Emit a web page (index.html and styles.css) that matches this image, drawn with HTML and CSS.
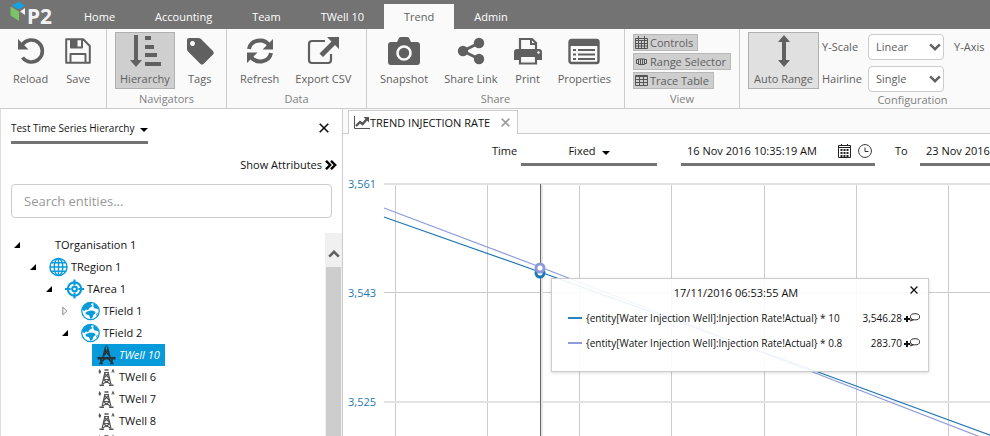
FILE: index.html
```html
<!DOCTYPE html>
<html lang="en">
<head>
    <meta charset="UTF-8">
    <meta name="viewport" content="width=device-width, initial-scale=1.0">
    <title>P2 - Trend</title>
    <link rel="stylesheet" href="styles.css">
</head>
<body>

<svg class="sprite" aria-hidden="true">
    <symbol id="globe" viewBox="0 0 20 20">
        <g fill="none" stroke="#089bdb" stroke-width="1.5">
            <circle cx="10" cy="10" r="9"/>
            <ellipse cx="10" cy="10" rx="4.5" ry="9"/>
            <path d="M10 1v18M1 10h18M2.5 5.5h15M2.5 14.5h15"/>
        </g>
    </symbol>
    <symbol id="target" viewBox="0 0 20 20">
        <g fill="none" stroke="#089bdb" stroke-width="2.2">
            <circle cx="10" cy="10" r="7"/>
            <circle cx="10" cy="10" r="2.5"/>
            <path d="M10 0v6M10 14v6M0 10h6M14 10h6"/>
        </g>
    </symbol>
    <symbol id="earth" viewBox="0 0 20 20">
        <circle cx="10" cy="10" r="9.2" fill="#fff" stroke="#089bdb" stroke-width="1.3"/>
        <path fill="#089bdb" d="M1 9 3 4l4-3 5 0-1.500 2L12 5 9 6.500 7.500 9 5 8.500 4 10ZM13 1.500l4 3 2 4-2.500-1L14 7l-1-2ZM5 11l5-1.500 4 .5 1.500 2-2.500 2-1 3-2 1.500-1.500-4L5 13.500ZM16 13l2-1-1.500 3.500Z"/>
    </symbol>
    <symbol id="well" viewBox="0 0 18 20">
        <g fill="none" stroke="#555" stroke-width="1.1">
            <path d="M7.500 5 4.500 17.500M10.500 5l3 12.500M6.500 5.500h5M6.500 9h5M6 12.500h6M7 6l5 6M11 6l-5 6M5 17l7-4M13 17l-7-4"/>
            <path d="M2 18.200h4.500M11.500 18.200H16M7 3h4" stroke-width="1.600"/>
        </g>
        <path fill="#555" d="M2 2l1.600 2.500L3 6.500H1.600L1 4.500ZM15.500 1.500l1.700 4h-1.200l-.5-1.400-.5 1.400h-1.200Z"/>
    </symbol>
    <symbol id="rig" viewBox="0 0 18 20">
        <g fill="none" stroke="#26323a" stroke-width="1.2">
            <path d="M8 2 5.4 12M10 2l2.600 10M7 5h4M6.500 8h5M7 5l5 6M11 5l-5 6M8 1h2"/>
            <path d="M0 13.200h18" stroke-width="2.600"/>
            <path d="M3.500 14v5M14.500 14v5M1.800 18.600h3.600M12.600 18.600h3.600M4 17l3-3M14 17l-3-3" stroke-width="1.500"/>
        </g>
    </symbol>
    <symbol id="open" viewBox="0 0 6 6"><path d="M6 0v6H0Z"/></symbol>
    <symbol id="closed" viewBox="0 0 6 10"><path fill="#fff" stroke="#888" d="M.8 1.2 4.8 5 .8 8.8Z"/></symbol>
    <symbol id="close" viewBox="0 0 10 10"><path fill="none" stroke="currentColor" stroke-width="1.6" d="m.7.7 8.6 8.6M9.3.7.7 9.3"/></symbol>
    <symbol id="caret" viewBox="0 0 8 4"><path d="M0 0h8L4 4Z"/></symbol>
    <symbol id="chevron" viewBox="0 0 12 8"><path fill="none" stroke="#606060" stroke-width="2.4" d="m1.2 1.4 4.8 4.8 4.8-4.8"/></symbol>
    <symbol id="calendar" viewBox="0 0 13 14">
        <path fill="none" stroke="#222" d="M.5 1.5h12v12H.5ZM1 3.5h11M3.5 0v2M9.5 0v2"/>
        <path stroke="#222" stroke-width="2" stroke-dasharray="2 1" d="M2.500 6h8M2.500 9h8M2.500 12h8"/>
    </symbol>
    <symbol id="clock" viewBox="0 0 14 14"><path fill="none" stroke="#333" d="M7 .6a6.4 6.4 0 1 0 .01 0ZM7 3.5V7.5h3.5"/></symbol>
    <symbol id="comment" viewBox="0 0 16 9">
        <ellipse cx="11" cy="3.800" rx="4.600" ry="3.100" fill="none" stroke="#333"/>
        <path fill="none" stroke="#333" d="M7.500 5.500 6.500 8 9.500 6.800"/>
        <path stroke="#111" stroke-width="2" d="M0 6h6M3 3v6"/>
    </symbol>
</svg>

<header class="topbar">
    <a href="#" class="logo" aria-label="P2">
        <svg class="logo-mark" viewBox="0 0 17 20" aria-hidden="true">
            <path fill="#13a3e2" d="M8.500 0 15 3.500 8.500 7.500 2 3.500Z"/>
            <path fill="#7bc366" d="M.5 4.500 9 9.500V19L.5 13.500Z"/>
            <path fill="#f2f2f2" d="M10 9.500 15 6v7Z"/>
        </svg>
        <span class="logo-text">P2</span>
    </a>
    <nav class="menu">
        <a href="#">Home</a>
        <a href="#">Accounting</a>
        <a href="#">Team</a>
        <a href="#">TWell 10</a>
        <a href="#" class="active">Trend</a>
        <a href="#">Admin</a>
    </nav>
</header>

<div class="ribbon">
    <section class="group group-file">
        <div class="tools">
            <button class="tool">
                <svg viewBox="0 0 28 28"><path fill="none" stroke="#606060" stroke-width="3.600" d="M5.500 7.500A11 11 0 1 1 5.500 20.500"/><path fill="#606060" d="M1 2v10.500h10.500Z"/></svg>
                Reload
            </button>
            <button class="tool">
                <svg viewBox="0 0 28 28"><path fill="none" stroke="#606060" stroke-width="2" stroke-linejoin="round" d="M2.200 2.200h17L25.800 9v16.800H2.200ZM6.500 25.500V17h15v8.500M7 2.500v8h11v-8"/><path fill="#606060" d="M7 2h6.500v8.500H7Z"/></svg>
                Save
            </button>
        </div>
    </section>
    <section class="group group-nav">
        <div class="tools">
            <button class="tool pressed">
                <svg viewBox="0 0 32 32"><path fill="#606060" d="M5 0h4v25h4l-6 7-6-7h4ZM16 1h6v4h-6ZM16 10h9v4h-9ZM16 18h12v4H16ZM16 27h16v4H16Z"/></svg>
                Hierarchy
            </button>
            <button class="tool">
                <svg viewBox="0 0 28 28"><path fill="#606060" fill-rule="evenodd" d="M3 1h9q2 0 3 1L27 14q1.500 2 0 3.500L17.500 27q-1.500 1.200-3 0L2 14.500Q1 13.500 1 12V3q0-2 2-2ZM6.500 4a2.500 2.500 0 1 0 .01 0Z"/></svg>
                Tags
            </button>
        </div>
        <h2>Navigators</h2>
    </section>
    <section class="group group-data">
        <div class="tools">
            <button class="tool">
                <svg viewBox="0 0 28 28"><path fill="none" stroke="#606060" stroke-width="4" d="M3 12A11 10 0 0 1 23 8M25 16A11 10 0 0 1 5 20"/><path fill="#606060" d="M27 2v10.500H16.500ZM1 26V15.500h10.500Z"/></svg>
                Refresh
            </button>
            <button class="tool">
                <svg class="wide" viewBox="0 0 32 28"><path fill="none" stroke="#606060" stroke-width="2.200" d="M18 4H5Q2 4 2 7v16q0 3 3 3h16q3 0 3-3v-6"/><path fill="#606060" d="M20 0h12v12l-4-4-12 12-3.500-3.500L24.500 4.500Z"/></svg>
                Export CSV
            </button>
        </div>
        <h2>Data</h2>
    </section>
    <section class="group group-share">
        <div class="tools">
            <button class="tool">
                <svg class="wide" viewBox="0 0 32 28"><path fill="#606060" d="M3 5h6l2-4q.500-1 2-1h6q1.500 0 2 1l2 4h6q3 0 3 3v17q0 3-3 3H3q-3 0-3-3V8q0-3 3-3Z"/><circle cx="16" cy="16" r="6.500" fill="#606060" stroke="#fafafa" stroke-width="2.600"/></svg>
                Snapshot
            </button>
            <button class="tool">
                <svg viewBox="0 0 28 28"><g fill="#606060"><circle cx="6" cy="14" r="5.200"/><circle cx="22" cy="6" r="5.200"/><circle cx="22" cy="22" r="5.200"/></g><path fill="none" stroke="#606060" stroke-width="3" d="M22 6 6 14l16 8"/></svg>
                Share Link
            </button>
            <button class="tool">
                <svg viewBox="0 0 28 28"><path fill="#606060" d="M3 12h22q3 0 3 3v8h-5v-4H5v4H0v-8q0-3 3-3Z"/><path fill="#fafafa" stroke="#606060" stroke-width="2.200" d="M6 13V2h12l4 4v7ZM6 19h16v7.500H6Z"/><path stroke="#606060" stroke-width="2" d="M17 2v5h5" fill="none"/><circle cx="24.500" cy="15.500" r="1.200" fill="#fafafa"/></svg>
                Print
            </button>
            <button class="tool">
                <svg class="wide" viewBox="0 0 32 28"><rect x="1.500" y="3" width="29" height="23" rx="2" fill="#fafafa" stroke="#606060" stroke-width="2.400"/><path fill="#606060" d="M1 3h30v6H1Z"/><path stroke="#606060" stroke-width="2" d="M5 13h3M10 13h17M5 17.500h3M10 17.500h17M5 22h3M10 22h17"/></svg>
                Properties
            </button>
        </div>
        <h2>Share</h2>
    </section>
    <section class="group group-view">
        <div class="toggles">
            <button class="toggle">
                <svg viewBox="0 0 13 13"><path fill="none" stroke="#555" d="M.5 2.500h12v10H.5ZM.5 4.500h12M.5 7.500h12M.5 10h12M3.500 4v9M6.500 4v9M9.500 4v9M3.500 0v4M9.500 0v4"/></svg>
                Controls
            </button>
            <button class="toggle">
                <svg viewBox="0 0 13 13"><path fill="none" stroke="#555" d="M3 4.500H1.500v4H3M10 4.500h1.500v4H10M3.500 4v5.500h6V4ZM5.500 4v5M7.500 4v5"/></svg>
                Range Selector
            </button>
            <button class="toggle">
                <svg viewBox="0 0 13 13"><path fill="none" stroke="#555" d="M.5 1.500h12v10H.5ZM.5 2.500h12M.5 5.500h12M.5 8.500h12M4.500 2v10M8.500 2v10"/></svg>
                Trace Table
            </button>
        </div>
        <h2>View</h2>
    </section>
    <section class="group group-config">
        <div class="config">
            <button class="tool pressed light">
                <svg viewBox="0 0 32 32"><path fill="#606060" d="M16 0l6 7h-4v18h4l-6 7-6-7h4V7h-4Z"/></svg>
                Auto Range
            </button>
            <div class="fields">
                <label for="yScale">Y-Scale</label>
                <span class="select">
                    <select id="yScale"><option>Linear</option><option>Log</option></select>
                    <svg><use href="#chevron"/></svg>
                </span>
                <span>Y-Axis</span>
                <label for="hairline">Hairline</label>
                <span class="select">
                    <select id="hairline"><option>Single</option><option>Multiple</option></select>
                    <svg><use href="#chevron"/></svg>
                </span>
            </div>
        </div>
        <h2>Configuration</h2>
    </section>
</div>

<main class="workspace">
    <aside class="sidebar">
        <div class="sidebar-head">
            <button class="dropdown hierarchy">Test Time Series Hierarchy <svg class="caret"><use href="#caret"/></svg></button>
            <button class="close" aria-label="Close"><svg><use href="#close"/></svg></button>
        </div>
        <a href="#" class="attributes">Show Attributes
            <svg viewBox="0 0 12 10"><path fill="none" stroke="#000" stroke-width="2.400" d="m1 .8 4.200 4.200L1 9.200M6 .8 10.200 5 6 9.200"/></svg>
        </a>
        <input type="text" class="search" placeholder="Search entities..." aria-label="Search entities">
        <div class="tree-wrap">
            <ul class="tree">
                <li><svg class="arrow"><use href="#open"/></svg><span class="icon"></span>TOrganisation 1</li>
                <li class="level-1"><svg class="arrow"><use href="#open"/></svg><svg class="icon"><use href="#globe"/></svg>TRegion 1</li>
                <li class="level-2"><svg class="arrow"><use href="#open"/></svg><svg class="icon"><use href="#target"/></svg>TArea 1</li>
                <li class="level-3"><svg class="arrow shut"><use href="#closed"/></svg><svg class="icon"><use href="#earth"/></svg>TField 1</li>
                <li class="level-3"><svg class="arrow"><use href="#open"/></svg><svg class="icon"><use href="#earth"/></svg>TField 2</li>
                <li class="leaf selected"><svg class="icon"><use href="#rig"/></svg>TWell 10</li>
                <li class="leaf"><svg class="icon"><use href="#well"/></svg>TWell 6</li>
                <li class="leaf"><svg class="icon"><use href="#well"/></svg>TWell 7</li>
                <li class="leaf"><svg class="icon"><use href="#well"/></svg>TWell 8</li>
                <li class="leaf"><svg class="icon"><use href="#well"/></svg></li>
            </ul>
            <div class="scrollbar">
                <svg viewBox="0 0 12 8"><path fill="none" stroke="#606060" stroke-width="2.600" d="M1.200 6.600 6 1.800l4.800 4.800"/></svg>
                <div class="thumb"></div>
            </div>
        </div>
    </aside>

    <section class="content">
        <div class="tabs">
            <div class="tab">
                <svg class="tab-icon" viewBox="0 0 16 13"><path fill="none" stroke="#555" d="M.5 0v12.500H16"/><path fill="none" stroke="#555" stroke-width="2.400" d="m2 10 4-4 2.500 2L13 3"/><path fill="#555" d="M9.500 1H15v5.500Z"/></svg>
                <span>TREND INJECTION RATE</span>
                <button class="tab-close" aria-label="Close tab"><svg><use href="#close"/></svg></button>
            </div>
        </div>
        <div class="range">
            <span class="range-label">Time</span>
            <button class="dropdown mode">Fixed <svg class="caret"><use href="#caret"/></svg></button>
            <div class="date">
                <input type="text" value="16 Nov 2016 10:35:19 AM" aria-label="From">
                <svg class="calendar"><use href="#calendar"/></svg>
                <svg class="clock"><use href="#clock"/></svg>
            </div>
            <span class="to">To</span>
            <div class="date">
                <input type="text" value="23 Nov 2016 10:35:19 AM" aria-label="To">
                <svg class="calendar"><use href="#calendar"/></svg>
                <svg class="clock"><use href="#clock"/></svg>
            </div>
        </div>
        <div class="chart">
            <svg class="plot">
                <g class="grid">
                    <path d="M52.500 8v400M144.500 8v400M236.500 8v400M328.500 8v400M421.500 8v400M513.500 8v400M605.500 8v400"/>
                    <path class="soft" d="M41 8h2000M41 226h2000"/>
                    <path d="M41 116.500h2000"/>
                </g>
                <g class="axis">
                    <text x="5" y="12">3,561</text>
                    <text x="5" y="121">3,543</text>
                    <text x="5" y="230">3,525</text>
                </g>
                <path class="halo" d="M198.500 8v400"/>
                <path class="trace-a" d="M41 41 197 96 475 196 660 264"/>
                <path class="trace-b" d="M41 32 197 91 467 195 640 262"/>
                <path class="hairline" d="M197.500 8v400"/>
                <circle class="dot-a" cx="197" cy="97" r="4"/>
                <circle class="dot-b" cx="197" cy="92" r="4"/>
            </svg>
            <div class="tooltip">
                <button class="tooltip-close" aria-label="Close"><svg><use href="#close"/></svg></button>
                <p>17/11/2016 06:53:55 AM</p>
                <ul>
                    <li><i class="key key-a"></i><span>{entity[Water Injection Well]:Injection Rate!Actual} * 10</span><b>3,546.28</b><svg><use href="#comment"/></svg></li>
                    <li><i class="key key-b"></i><span>{entity[Water Injection Well]:Injection Rate!Actual} * 0.8</span><b>283.70</b><svg><use href="#comment"/></svg></li>
                </ul>
            </div>
        </div>
    </section>
</main>

</body>
</html>
```
FILE: styles.css
```css
* {
    box-sizing: border-box;
}
body {
    display: flex;
    flex-direction: column;
    height: 100vh;
    margin: 0;
    overflow: hidden;
    font-family: "Open Sans", "Noto Sans", sans-serif;
    font-size: 11px;
    line-height: 16px;
    color: #111;
    background: #fff;
}
button, input, select {
    font: inherit;
    color: inherit;
    padding: 0;
    border: 0;
    background: none;
}
a {
    color: inherit;
    text-decoration: none;
}
ul, p, h2 {
    margin: 0;
    padding: 0;
    list-style: none;
}
svg {
    flex: none;
}
.sprite {
    position: absolute;
    width: 0;
    height: 0;
}

/* top bar */
.topbar {
    display: flex;
    flex: none;
    height: 29px;
    background: #737373;
    color: #fff;
}
.logo {
    display: flex;
    width: 64px;
    padding: 2px 0 0 10px;
}
.logo-mark {
    width: 17px;
    height: 20px;
}
.logo-text {
    padding-top: 5px;
    font-family: "Noto Sans", sans-serif;
    font-size: 21px;
    font-weight: bold;
    line-height: 18px;
    color: #f2f2f2;
}
.menu {
    display: flex;
    padding-top: 4px;
}
.menu a {
    padding: 5px 20px 4px;
}
.menu .active {
    background: #fafafa;
    color: #606060;
}

/* ribbon */
.ribbon {
    display: flex;
    flex: none;
    height: 80px;
    overflow: hidden;
    background: #fafafa;
    border-bottom: 1px solid #ccc;
    color: #606060;
}
.group {
    display: flex;
    flex: none;
    flex-direction: column;
    justify-content: space-between;
    padding: 3px 8px 1px;
    border-right: 1px solid #ccc;
}
.group-file {
    width: 107px;
}
.group-nav {
    width: 120px;
}
.group-data {
    width: 140px;
}
.group-share {
    width: 258px;
}
.group-view {
    width: 115px;
}
.group-config {
    flex: 1 0 346px;
}
.group h2 {
    font-size: 11px;
    font-weight: normal;
    line-height: 16px;
    text-align: center;
    color: #808080;
}
.tools {
    display: flex;
    gap: 6px;
}
.tool {
    display: flex;
    flex-direction: column;
    align-items: center;
    justify-content: space-between;
    height: 57px;
    padding: 3px 4px 1px;
    border: 1px solid transparent;
    white-space: nowrap;
}
.tool svg {
    width: 28px;
    height: 28px;
    margin-top: 1px;
}
.tool svg.wide {
    width: 32px;
}
.tool.pressed {
    background: #cfcfcf;
    border-color: #b0b0b0;
}
.tool.pressed svg {
    width: 32px;
    height: 32px;
    margin-top: -1px;
}
.tool.light {
    background: #e0e0e0;
}
.toggles {
    display: flex;
    flex-direction: column;
    align-items: flex-start;
    gap: 2px;
    padding-top: 2px;
}
.toggle {
    display: flex;
    align-items: center;
    gap: 2px;
    height: 17px;
    padding: 0 4px 0 1px;
    background: #cfcfcf;
    border: 1px solid #b8b8b8;
    line-height: 15px;
    white-space: nowrap;
}
.toggle svg {
    width: 13px;
    height: 13px;
}
.config {
    display: flex;
    gap: 3px;
}
.config .tool {
    width: 71px;
    padding-left: 0;
    padding-right: 0;
}
.fields {
    display: grid;
    grid-template-columns: 46px 76px auto;
    grid-auto-rows: 26px;
    align-items: center;
    gap: 6px 0;
    padding-top: 2px;
}
.fields > :nth-child(3) {
    padding-left: 10px;
}
.select {
    position: relative;
}
.select select {
    width: 100%;
    height: 26px;
    padding: 0 7px;
    background: #fff;
    border: 1px solid #ccc;
    border-radius: 4px;
    appearance: none;
}
.select svg {
    position: absolute;
    top: 9px;
    right: 3px;
    width: 12px;
    height: 8px;
    pointer-events: none;
}

/* hierarchy panel */
.workspace {
    display: flex;
    flex: 1;
    min-height: 0;
}
.sidebar {
    display: flex;
    flex: none;
    flex-direction: column;
    width: 343px;
    padding: 11px 0 0 10px;
    border-left: 1px solid #ddd;
    border-right: 1px solid #ccc;
}
.sidebar-head {
    display: flex;
    justify-content: space-between;
    padding-right: 13px;
}
.dropdown {
    display: flex;
    align-items: center;
    justify-content: center;
    gap: 6px;
    height: 24px;
    padding-bottom: 5px;
    border-bottom: 3px solid #737373;
    white-space: nowrap;
}
.hierarchy {
    font-size: 10px;
}
.caret {
    width: 8px;
    height: 4px;
    margin-top: 3px;
}
.close svg {
    display: block;
    width: 10px;
    height: 10px;
}
.close {
    height: 16px;
}
.attributes {
    display: flex;
    align-items: center;
    align-self: flex-end;
    gap: 3px;
    margin: 13px 5px 11px 0;
}
.attributes svg {
    width: 12px;
    height: 10px;
}
.search {
    height: 34px;
    margin-right: 10px;
    padding: 0 12px;
    border: 1px solid #ccc;
    border-radius: 4px;
    font-size: 13px;
}
.search::placeholder {
    color: #999;
    opacity: 1;
}
.tree-wrap {
    display: flex;
    flex: 1;
    justify-content: space-between;
    min-height: 0;
    padding-top: 15px;
}
.tree {
    padding-top: 1px;
    overflow: hidden;
}
.tree li {
    display: flex;
    align-items: center;
    gap: 3px;
    height: 22px;
    padding-left: 3px;
    white-space: nowrap;
}
.arrow {
    width: 6px;
    height: 6px;
    margin-right: 10px;
}
.arrow.shut {
    height: 10px;
}
.icon {
    width: 19px;
    height: 20px;
}
.tree .level-1 {
    padding-left: 19px;
}
.tree .level-2 {
    padding-left: 35px;
}
.tree .level-3 {
    padding-left: 51px;
}
.tree .leaf {
    width: 73px;
    margin-left: 81px;
    padding-left: 5px;
}
.tree .selected {
    background: #089bdb;
    color: #fff;
    font-style: italic;
}
.scrollbar {
    display: flex;
    flex-direction: column;
    width: 17px;
    padding: 0 1px;
    background: #f0f0f0;
}
.scrollbar svg {
    width: 12px;
    height: 8px;
    margin: 17px 2px 9px;
}
.thumb {
    flex: 1;
    background: #cdcdcd;
}

/* trend page */
.content {
    display: flex;
    flex: 1;
    flex-direction: column;
    min-width: 0;
    overflow: hidden;
}
.tabs {
    flex: none;
    height: 25px;
    padding: 1px 5px 0;
    background: #fafafa;
    border-bottom: 1px solid #ccc;
}
.tab {
    display: flex;
    align-items: center;
    width: 170px;
    height: 24px;
    padding: 0 7px 0 5px;
    background: #fff;
    border: 1px solid #ccc;
    border-bottom: 0;
    white-space: nowrap;
}
.tab-icon {
    width: 16px;
    height: 13px;
}
.tab-close {
    margin-left: auto;
    color: #999;
}
.tab-close svg {
    display: block;
    width: 9px;
    height: 9px;
}
.range {
    display: flex;
    flex: none;
    height: 42px;
    padding: 9px 0 0 149px;
}
.range > * {
    flex: none;
}
.mode {
    width: 136px;
    margin: 0 24px 0 5px;
}
.range-label {
    width: 24px;
    white-space: nowrap;
}
.range .dropdown, .date {
    height: 23px;
    padding-bottom: 4px;
}
.date {
    display: flex;
    align-items: center;
    width: 194px;
    padding-left: 6px;
    border-bottom: 3px solid #737373;
}
.date input {
    width: 151px;
}
.calendar {
    width: 13px;
    height: 14px;
    margin-right: 7px;
}
.clock {
    width: 14px;
    height: 14px;
}
.to {
    width: 45px;
    padding-left: 20px;
}
.chart {
    position: relative;
    flex: 1;
    min-height: 0;
}
.plot {
    display: block;
    width: 100%;
    height: 100%;
    fill: none;
}
.grid path {
    stroke: #ccc;
}
.grid .soft {
    stroke: #e2e2e2;
    stroke-width: 2;
}
.axis text {
    fill: #1f77b4;
}
.halo {
    stroke: #e6e6e6;
    stroke-width: 3;
}
.hairline {
    stroke: #666;
}
.trace-a, .dot-a {
    stroke: #1f77b4;
}
.trace-b, .dot-b {
    stroke: #8e9bdb;
}
.trace-a, .trace-b {
    stroke-width: 1.2;
}
.dot-a, .dot-b {
    fill: #fff;
    stroke-width: 3;
}
.tooltip {
    position: absolute;
    top: 102px;
    left: 208px;
    width: 378px;
    height: 94px;
    padding: 6px 8px 0 16px;
    background: rgba(255, 255, 255, 0.9);
    border: 1px solid #ccc;
    box-shadow: 0 1px 3px rgba(0, 0, 0, 0.15);
}
.tooltip p {
    text-align: center;
    padding-right: 16px;
}
.tooltip-close {
    float: right;
    padding: 1px 2px 0 0;
}
.tooltip-close svg {
    display: block;
    width: 8px;
    height: 8px;
}
.tooltip ul {
    padding-top: 4px;
    font-size: 10px;
}
.tooltip li {
    display: flex;
    align-items: center;
    height: 25px;
    white-space: nowrap;
}
.tooltip b {
    margin-left: auto;
    font-weight: normal;
}
.tooltip li svg {
    width: 16px;
    height: 9px;
    margin-left: 2px;
}
.key {
    flex: none;
    width: 14px;
    height: 2px;
    margin-right: 4px;
}
.key-a {
    background: #2b82bd;
}
.key-b {
    background: #8e9bdb;
}
```
